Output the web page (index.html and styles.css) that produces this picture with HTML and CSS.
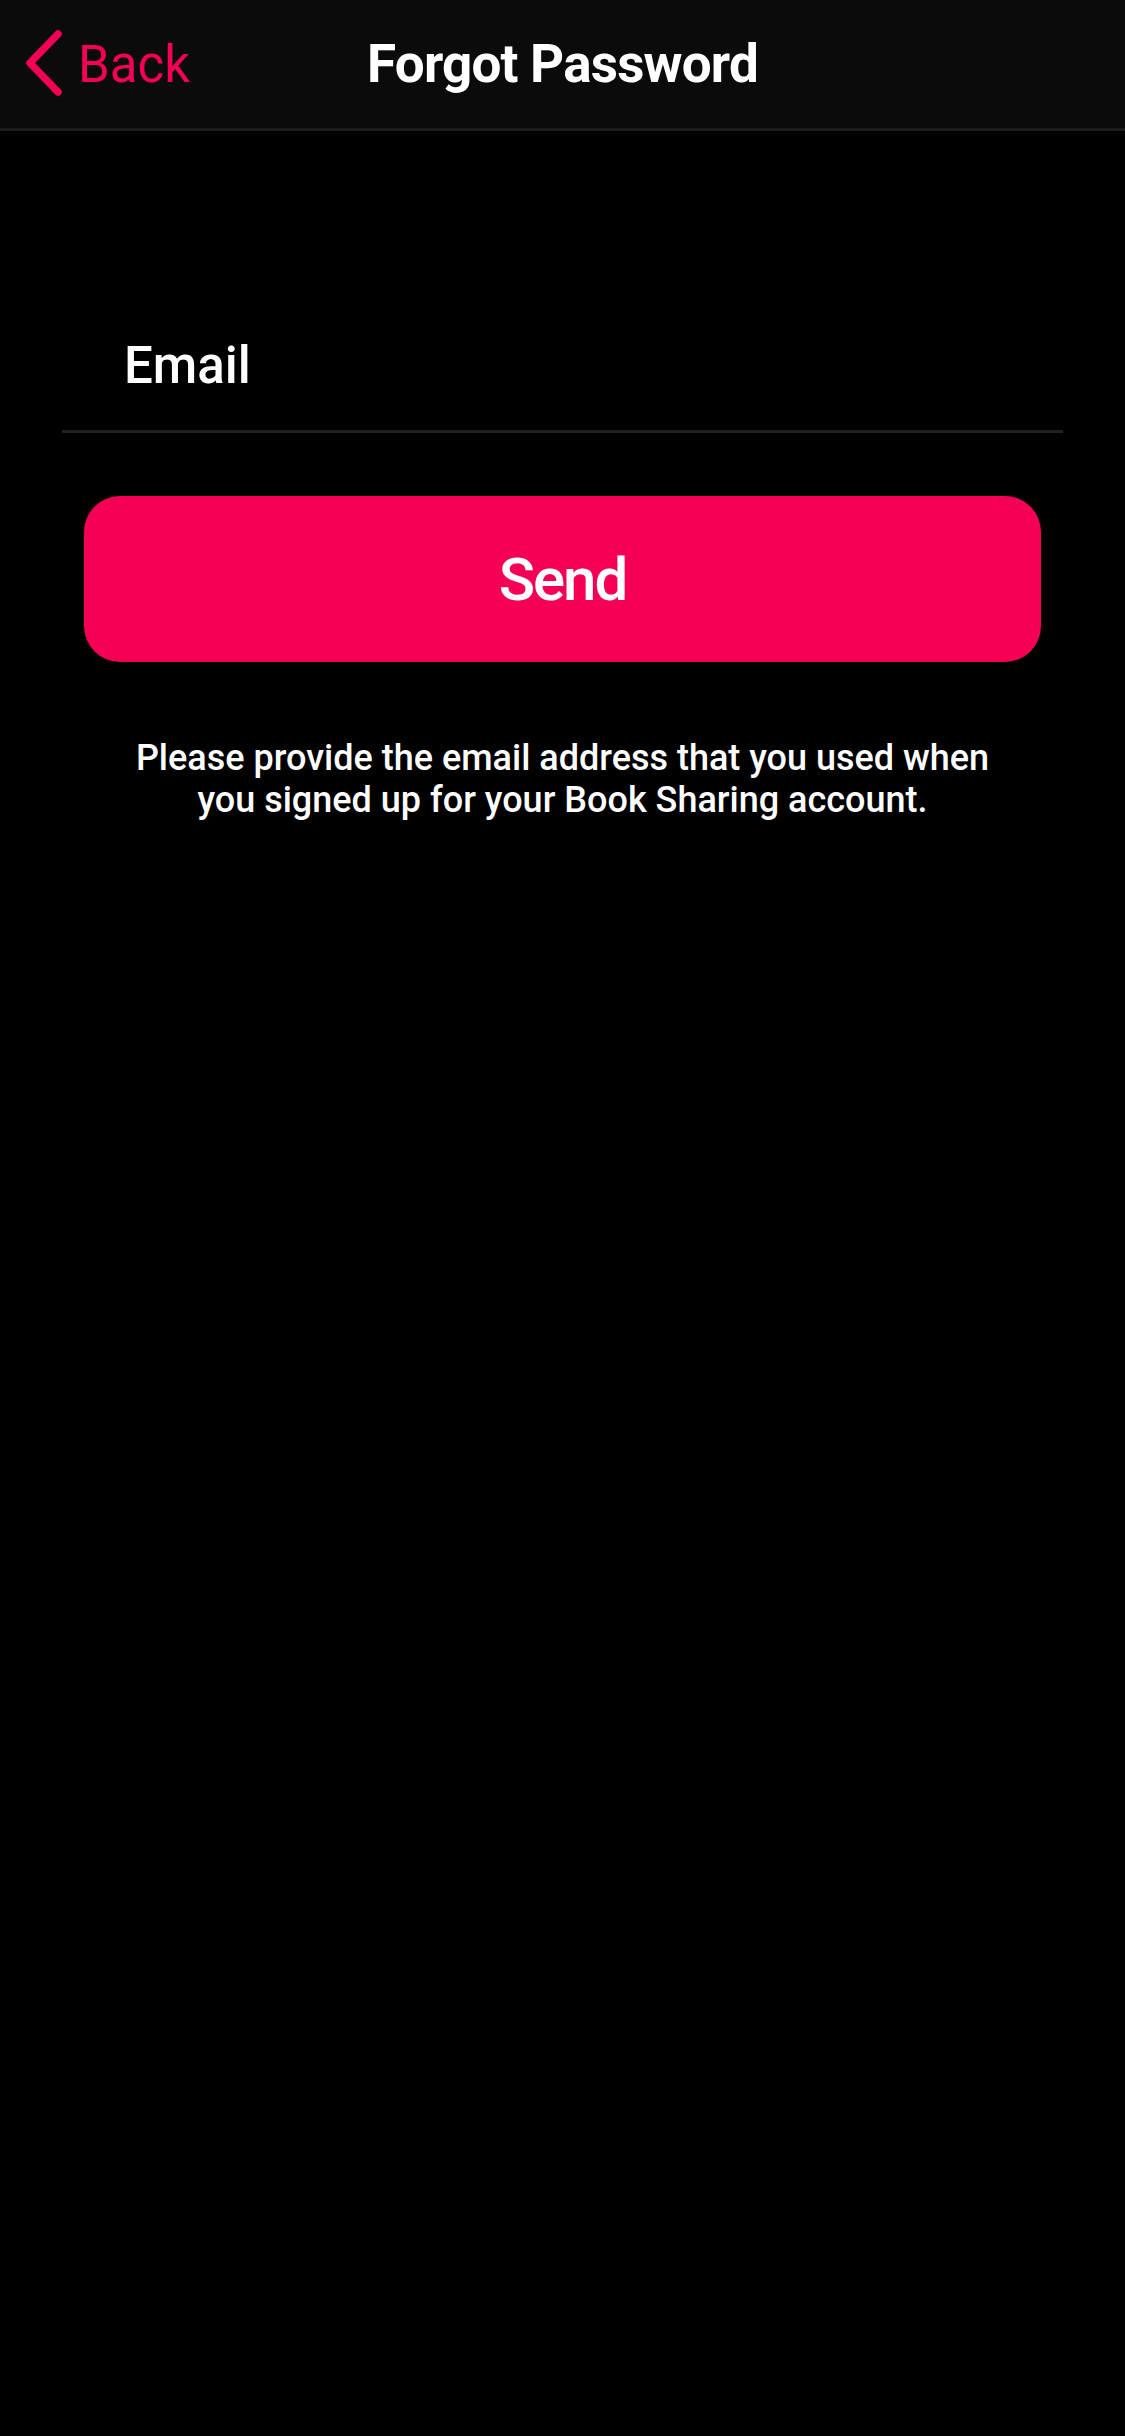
FILE: index.html
```html
<!DOCTYPE html>
<html lang="en">
<head>
<meta charset="utf-8">
<title>Forgot Password</title>
<link rel="stylesheet" href="styles.css">
</head>
<body>
<div class="screen">
  <header class="nav">
    <div class="nav-left">
      <svg class="chevron" width="40" height="70" viewBox="0 0 40 70" aria-hidden="true">
        <path d="M34 5 L6 34 L34 63" fill="none" stroke="#f50057" stroke-width="7.5" stroke-linecap="round" stroke-linejoin="round"/>
      </svg>
      <span class="back-label">Back</span>
    </div>
    <h1 class="nav-title">Forgot Password</h1>
    <div class="nav-right"></div>
  </header>
  <main class="content">
    <div class="field">
      <span class="field-label">Email</span>
    </div>
    <button class="send-btn" type="button">Send</button>
    <p class="hint">Please provide the email address that you used when<br>you signed up for your Book Sharing account.</p>
  </main>
</div>
</body>
</html>
```
FILE: styles.css
```css
html, body {
  margin: 0;
  padding: 0;
  background: #000;
}
body {
  font-family: Roboto, "Noto Sans", Arial, sans-serif;
  color: #fff;
}
.screen {
  width: 1125px;
  min-height: 2436px;
  background: #000;
}
.nav {
  height: 128px;
  background: #0b0b0b;
  border-bottom: 3px solid #1c1c1c;
  display: grid;
  grid-template-columns: 1fr auto 1fr;
  align-items: center;
}
.nav-left {
  display: flex;
  align-items: center;
  padding-left: 24px;
  gap: 14px;
}
.chevron {
  display: block;
}
.back-label {
  color: #f50057;
  font-size: 51px;
  font-weight: 400;
  line-height: 1;
}
.nav-title {
  margin: 0;
  font-size: 53px;
  font-weight: 700;
  letter-spacing: -0.8px;
  line-height: 1;
}
.content {
  display: flex;
  flex-direction: column;
}
.field {
  margin: 204px 62px 0;
  padding: 0 0 33px 62px;
  border-bottom: 3px solid #222;
}
.field-label {
  display: block;
  font-size: 51px;
  font-weight: 500;
  line-height: 62px;
}
.send-btn {
  margin: 63px 84px 0;
  height: 166px;
  border: none;
  border-radius: 36px;
  background: #f50057;
  color: #fff;
  font-family: Roboto, "Noto Sans", Arial, sans-serif;
  font-size: 60px;
  font-weight: 500;
  letter-spacing: -2px;
  padding: 0;
}
.hint {
  margin: 75px 0 0;
  text-align: center;
  font-size: 36px;
  font-weight: 500;
  line-height: 42px;
}
```
